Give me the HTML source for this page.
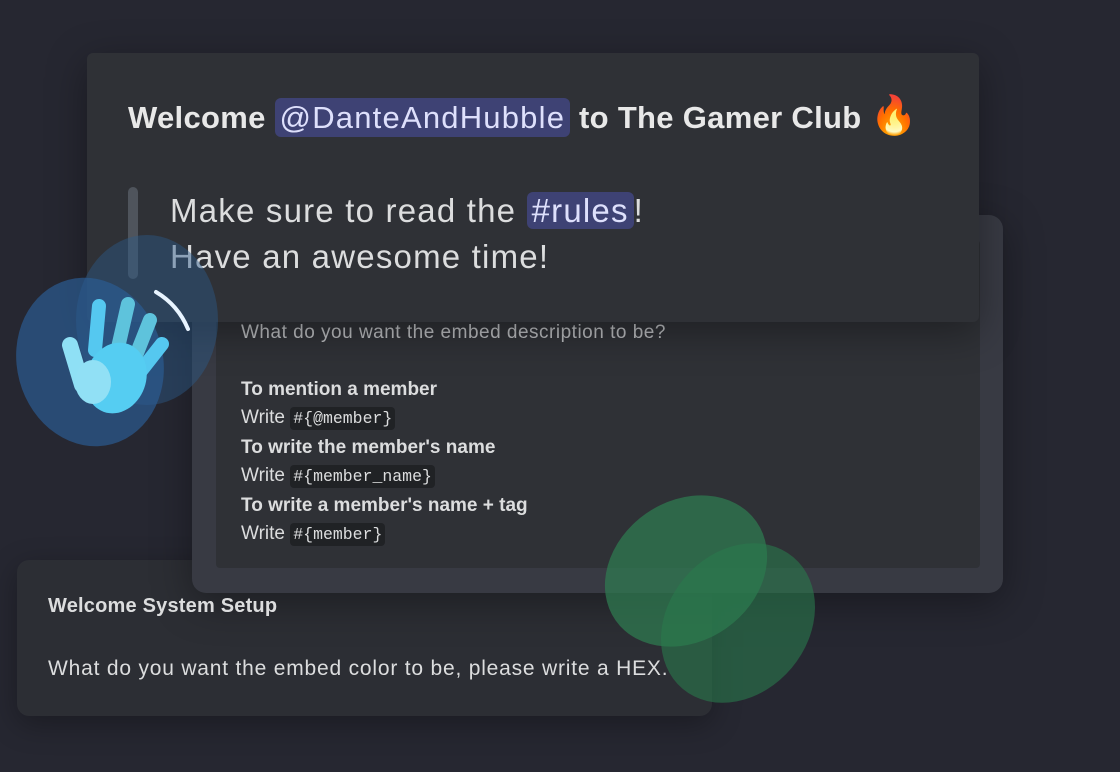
<!DOCTYPE html>
<html><head><meta charset="utf-8"><style>
*{margin:0;padding:0;box-sizing:border-box}
body{width:1120px;height:772px;background:#262731;position:relative;overflow:hidden;font-family:"Liberation Sans","DejaVu Sans",sans-serif;color:#dcddde}
.abs{position:absolute}
.mono{font-family:"Liberation Mono","DejaVu Sans Mono",monospace;background:#202225;border-radius:4px;padding:2px 3px;font-size:16.5px}
</style></head><body>
<!-- bottom card -->
<div class="abs" style="left:17px;top:560px;width:695px;height:156px;background:#2c2e34;border-radius:12px;box-shadow:0 8px 30px rgba(0,0,0,.3)"></div>
<!-- embed card -->
<div class="abs" style="left:192px;top:215px;width:811px;height:378px;background:#383a43;border-radius:14px;box-shadow:0 10px 40px rgba(0,0,0,.35)"></div>
<div class="abs" style="left:216px;top:240px;width:764px;height:328px;background:#2f3136;border-radius:4px"></div>
<div class="abs" style="left:48px;top:595px;font-size:20px;font-weight:bold;color:#dcddde;letter-spacing:0.2px;z-index:2">Welcome System Setup</div>
<div class="abs" style="left:48px;top:657px;font-size:21px;color:#dcddde;letter-spacing:0.8px;white-space:nowrap;z-index:2">What do you want the embed color to be, please write a HEX.</div>
<div class="abs" style="left:241px;top:319px;font-size:19px;line-height:28.5px;color:#dcddde;white-space:nowrap">
<div style="color:#b9bbbe;letter-spacing:0.5px">What do you want the embed description to be?</div>
<div style="height:28px"></div>
<div style="font-weight:bold">To mention a member</div>
<div>Write <span class="mono">#{@member}</span></div>
<div style="font-weight:bold">To write the member's name</div>
<div>Write <span class="mono">#{member_name}</span></div>
<div style="font-weight:bold">To write a member's name + tag</div>
<div>Write <span class="mono">#{member}</span></div>
</div>
<!-- top card -->
<div class="abs" style="left:87px;top:53px;width:892px;height:269px;background:#2f3136;border-radius:6px;box-shadow:0 10px 40px rgba(0,0,0,.35)"></div>
<div class="abs" style="left:128px;top:94px;font-size:31px;font-weight:bold;color:#e8e8e8;white-space:nowrap;letter-spacing:0.3px">Welcome <span style="font-weight:normal;background:#3e4274;color:#dee0fc;border-radius:6px;padding:2px 5px;letter-spacing:1.2px">@DanteAndHubble</span> to The Gamer Club <span style="font-size:38px">🔥</span></div>
<div class="abs" style="left:128px;top:187px;width:10px;height:92px;background:#4f545c;border-radius:5px"></div>
<div class="abs" style="left:170px;top:188px;font-size:33px;line-height:46px;color:#dcddde;white-space:nowrap;letter-spacing:1.2px">
<div>Make sure to read the <span style="background:#3e4274;color:#dee0fc;border-radius:6px;padding:0 5px">#rules</span>!</div>
<div>Have an awesome time!</div></div>
<!-- blobs -->
<svg class="abs" style="left:0;top:0" width="1120" height="772">
<ellipse cx="147" cy="320" rx="71" ry="85" fill="#2d5a8a" opacity=".45"/>
<ellipse cx="90" cy="362" rx="73" ry="85" fill="#2b5b92" opacity=".7" transform="rotate(-15 90 362)"/>
<g stroke-linecap="round" fill="none">
<line x1="99" y1="306" x2="95" y2="350" stroke="#55c8f0" stroke-width="14"/>
<line x1="128" y1="304" x2="117" y2="352" stroke="#5ec3dc" stroke-width="14"/>
<line x1="150" y1="320" x2="135" y2="358" stroke="#5ec3dc" stroke-width="14"/>
<line x1="162" y1="344" x2="140" y2="372" stroke="#55c8f0" stroke-width="14"/>
<line x1="70" y1="345" x2="82" y2="385" stroke="#8fe0f5" stroke-width="16"/>
<path d="M156 292 Q178 305 188 329" stroke="#e8f4ff" stroke-width="4"/>
</g>
<ellipse cx="116" cy="378" rx="30" ry="36" fill="#55cdf2" transform="rotate(20 116 378)"/>
<ellipse cx="93" cy="382" rx="18" ry="22" fill="#91e0f5"/>
<ellipse cx="686" cy="571" rx="86" ry="70" fill="#2f7a50" opacity=".75" transform="rotate(-35 686 571)"/>
<ellipse cx="738" cy="623" rx="86" ry="70" fill="#2a7a4c" opacity=".6" transform="rotate(-50 738 623)"/>
</svg>
</body></html>
